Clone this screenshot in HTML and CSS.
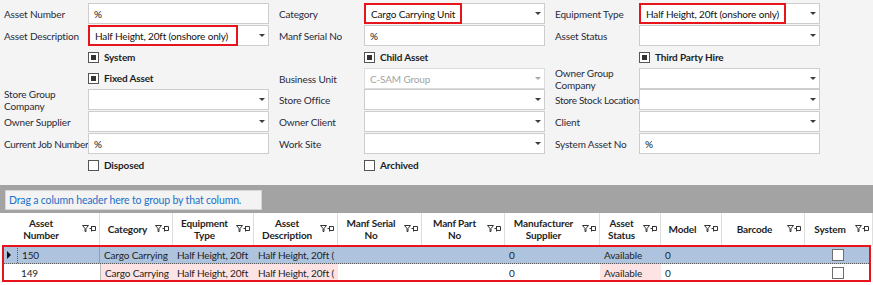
FILE: index.html
```html
<!DOCTYPE html>
<html lang="en">
<head>
    <meta charset="UTF-8">
    <title>Asset Search</title>
    <link rel="stylesheet" href="styles.css">
</head>
<body>

    <div class="filters">
        <div class="lbl">Asset Number</div>
        <div class="box"><span class="val">%</span></div>
        <div class="lbl">Category</div>
        <div class="box drop"><span class="val hl">Cargo Carrying Unit</span><i class="arrow"></i></div>
        <div class="lbl">Equipment Type</div>
        <div class="box drop"><span class="val hl">Half Height, 20ft (onshore only)</span><i class="arrow"></i></div>

        <div class="lbl">Asset Description</div>
        <div class="box drop"><span class="val hl hl-wide">Half Height, 20ft (onshore only)</span><i class="arrow"></i></div>
        <div class="lbl">Manf Serial No</div>
        <div class="box"><span class="val">%</span></div>
        <div class="lbl">Asset Status</div>
        <div class="box drop"><span class="val"></span><i class="arrow"></i></div>

        <div class="lbl"></div>
        <label class="check"><span class="cb on"></span>System</label>
        <div class="lbl"></div>
        <label class="check"><span class="cb on"></span>Child Asset</label>
        <div class="lbl"></div>
        <label class="check"><span class="cb on"></span>Third Party Hire</label>

        <div class="lbl"></div>
        <label class="check"><span class="cb on"></span>Fixed Asset</label>
        <div class="lbl">Business Unit</div>
        <div class="box drop disabled"><span class="val">C-SAM Group</span><i class="arrow"></i></div>
        <div class="lbl">Owner Group Company</div>
        <div class="box drop"><span class="val"></span><i class="arrow"></i></div>

        <div class="lbl">Store Group Company</div>
        <div class="box drop"><span class="val"></span><i class="arrow"></i></div>
        <div class="lbl">Store Office</div>
        <div class="box drop"><span class="val"></span><i class="arrow"></i></div>
        <div class="lbl nowrap tight">Store Stock Location</div>
        <div class="box drop"><span class="val"></span><i class="arrow"></i></div>

        <div class="lbl">Owner Supplier</div>
        <div class="box drop"><span class="val"></span><i class="arrow"></i></div>
        <div class="lbl">Owner Client</div>
        <div class="box drop"><span class="val"></span><i class="arrow"></i></div>
        <div class="lbl">Client</div>
        <div class="box drop"><span class="val"></span><i class="arrow"></i></div>

        <div class="lbl nowrap tight">Current Job Number</div>
        <div class="box"><span class="val">%</span></div>
        <div class="lbl">Work Site</div>
        <div class="box drop"><span class="val"></span><i class="arrow"></i></div>
        <div class="lbl">System Asset No</div>
        <div class="box"><span class="val">%</span></div>

        <div class="lbl"></div>
        <label class="check"><span class="cb"></span>Disposed</label>
        <div class="lbl"></div>
        <label class="check"><span class="cb"></span>Archived</label>
    </div>

    <div class="group-panel">
        <div class="group-hint">Drag a column header here to group by that column.</div>
    </div>

    <div class="grid-head">
        <div class="hcell"><span>Asset<br>Number</span><svg class="hicons" width="14" height="8" viewBox="0 0 14 8"><path d="M0.5 0.5H6.5L4 3.5V6.5H3V3.5Z" fill="none" stroke="#333"/><path d="M7.5 3.5H9.5M9.5 1V6.5M9.5 1.5H13.5V5.5H9.5" fill="none" stroke="#333"/></svg></div>
        <div class="hcell"><span>Category</span><svg class="hicons" width="14" height="8" viewBox="0 0 14 8"><path d="M0.5 0.5H6.5L4 3.5V6.5H3V3.5Z" fill="none" stroke="#333"/><path d="M7.5 3.5H9.5M9.5 1V6.5M9.5 1.5H13.5V5.5H9.5" fill="none" stroke="#333"/></svg></div>
        <div class="hcell"><span>Equipment<br>Type</span><svg class="hicons" width="14" height="8" viewBox="0 0 14 8"><path d="M0.5 0.5H6.5L4 3.5V6.5H3V3.5Z" fill="none" stroke="#333"/><path d="M7.5 3.5H9.5M9.5 1V6.5M9.5 1.5H13.5V5.5H9.5" fill="none" stroke="#333"/></svg></div>
        <div class="hcell"><span>Asset<br>Description</span><svg class="hicons" width="14" height="8" viewBox="0 0 14 8"><path d="M0.5 0.5H6.5L4 3.5V6.5H3V3.5Z" fill="none" stroke="#333"/><path d="M7.5 3.5H9.5M9.5 1V6.5M9.5 1.5H13.5V5.5H9.5" fill="none" stroke="#333"/></svg></div>
        <div class="hcell"><span>Manf Serial<br>No</span><svg class="hicons" width="14" height="8" viewBox="0 0 14 8"><path d="M0.5 0.5H6.5L4 3.5V6.5H3V3.5Z" fill="none" stroke="#333"/><path d="M7.5 3.5H9.5M9.5 1V6.5M9.5 1.5H13.5V5.5H9.5" fill="none" stroke="#333"/></svg></div>
        <div class="hcell"><span>Manf Part<br>No</span><svg class="hicons" width="14" height="8" viewBox="0 0 14 8"><path d="M0.5 0.5H6.5L4 3.5V6.5H3V3.5Z" fill="none" stroke="#333"/><path d="M7.5 3.5H9.5M9.5 1V6.5M9.5 1.5H13.5V5.5H9.5" fill="none" stroke="#333"/></svg></div>
        <div class="hcell"><span>Manufacturer<br>Supplier</span><svg class="hicons" width="14" height="8" viewBox="0 0 14 8"><path d="M0.5 0.5H6.5L4 3.5V6.5H3V3.5Z" fill="none" stroke="#333"/><path d="M7.5 3.5H9.5M9.5 1V6.5M9.5 1.5H13.5V5.5H9.5" fill="none" stroke="#333"/></svg></div>
        <div class="hcell"><span>Asset<br>Status</span><svg class="hicons" width="14" height="8" viewBox="0 0 14 8"><path d="M0.5 0.5H6.5L4 3.5V6.5H3V3.5Z" fill="none" stroke="#333"/><path d="M7.5 3.5H9.5M9.5 1V6.5M9.5 1.5H13.5V5.5H9.5" fill="none" stroke="#333"/></svg></div>
        <div class="hcell"><span>Model</span><svg class="hicons" width="14" height="8" viewBox="0 0 14 8"><path d="M0.5 0.5H6.5L4 3.5V6.5H3V3.5Z" fill="none" stroke="#333"/><path d="M7.5 3.5H9.5M9.5 1V6.5M9.5 1.5H13.5V5.5H9.5" fill="none" stroke="#333"/></svg></div>
        <div class="hcell"><span>Barcode</span><svg class="hicons" width="14" height="8" viewBox="0 0 14 8"><path d="M0.5 0.5H6.5L4 3.5V6.5H3V3.5Z" fill="none" stroke="#333"/><path d="M7.5 3.5H9.5M9.5 1V6.5M9.5 1.5H13.5V5.5H9.5" fill="none" stroke="#333"/></svg></div>
        <div class="hcell"><span>System</span><svg class="hicons" width="14" height="8" viewBox="0 0 14 8"><path d="M0.5 0.5H6.5L4 3.5V6.5H3V3.5Z" fill="none" stroke="#333"/><path d="M7.5 3.5H9.5M9.5 1V6.5M9.5 1.5H13.5V5.5H9.5" fill="none" stroke="#333"/></svg></div>
    </div>

    <div class="grid-rows">
        <div class="row selected">
            <div class="cell ind"><i class="row-arrow"></i></div>
            <div class="cell focus">150</div>
            <div class="cell">Cargo Carrying</div>
            <div class="cell">Half Height, 20ft</div>
            <div class="cell">Half Height, 20ft (</div>
            <div class="cell"></div>
            <div class="cell"></div>
            <div class="cell">0</div>
            <div class="cell">Available</div>
            <div class="cell">0</div>
            <div class="cell"></div>
            <div class="cell center"><span class="cb plain"></span></div>
        </div>
        <div class="row">
            <div class="cell ind"></div>
            <div class="cell">149</div>
            <div class="cell warn sep">Cargo Carrying</div>
            <div class="cell warn">Half Height, 20ft</div>
            <div class="cell warn">Half Height, 20ft (</div>
            <div class="cell"></div>
            <div class="cell"></div>
            <div class="cell">0</div>
            <div class="cell warn">Available</div>
            <div class="cell">0</div>
            <div class="cell"></div>
            <div class="cell center"><span class="cb plain"></span></div>
        </div>
    </div>

</body>
</html>
```

FILE: styles.css
```css
* {
    margin: 0;
    padding: 0;
    box-sizing: border-box;
}

body {
    font-family: Lato, 'Open Sans', sans-serif;
    font-size: 10px;
    letter-spacing: -0.15px;
    color: #1e1e1e;
    background: #ffffff;
}

/* filter form */

.filters {
    background: #f4f4f4;
    display: grid;
    grid-template-columns: 84px 181px 95px 181px 94px 181px;
    grid-template-rows: 22px 22px 21px 21px 22px 22px 22px 22px;
    padding: 3px 0 0 4px;
    height: 185px;
}

.lbl {
    display: flex;
    align-items: center;
    line-height: 12px;
    height: 21px;
    color: #2a2a3a;
}

.lbl:nth-child(6n+3),
.lbl:nth-child(6n+5) {
    padding-left: 10px;
}

.nowrap {
    white-space: nowrap;
}

.tight {
    letter-spacing: -0.3px;
}

.box {
    height: 21px;
    background: white;
    border: 1px solid #cdcdcd;
    display: flex;
    align-items: center;
}

.val {
    padding-left: 5px;
    color: #111;
    white-space: nowrap;
}

.val.hl {
    align-self: stretch;
    display: flex;
    align-items: center;
    margin: -1px 0 -1px -1px;
    border: 2px solid #e8141c;
    padding: 0 5px 0 5px;
}

.val.hl-wide {
    padding-right: 8px;
}

.disabled {
    border-color: #dcdcdc;
}

.disabled .val {
    color: #a4a4a4;
}

.arrow {
    margin-left: auto;
    margin-right: 3px;
    width: 0;
    height: 0;
    border-left: 3px solid transparent;
    border-right: 3px solid transparent;
    border-top: 3px solid #3c3c3c;
}

.disabled .arrow {
    border-top-color: #a8a8a8;
}

.check {
    display: flex;
    align-items: center;
    gap: 5px;
    font-weight: bold;
    height: 20px;
}

.cb {
    width: 11px;
    height: 11px;
    border: 1px solid #555;
    background: white;
    display: inline-block;
    position: relative;
}

.cb.on::after {
    content: '';
    position: absolute;
    left: 2px;
    top: 2px;
    width: 5px;
    height: 5px;
    background: #333;
}

.cb.plain {
    width: 12px;
    height: 12px;
    border-color: #6e6e6e;
}

/* grid */

.group-panel {
    background: #a3a3a3;
    height: 28px;
    padding: 5px 0 0 5px;
}

.group-hint {
    display: inline-flex;
    align-items: center;
    height: 20px;
    width: 257px;
    padding-left: 3px;
    background: #f3f3f3;
    border: 1px solid #d6d6d6;
    color: #2071c8;
    font-size: 10.5px;
}

.grid-head {
    display: grid;
    grid-template-columns: 100px 73px 81px 84px 84px 83px 95px 61px 61px 83px 68px;
    height: 32px;
    background: white;
}

.hcell {
    display: flex;
    align-items: center;
    border-right: 1px solid #dedede;
    font-weight: bold;
    line-height: 12px;
    padding-right: 3px;
}

.hcell span {
    flex: 1;
    text-align: center;
}

.hicons {
    flex: none;
}

.grid-rows {
    margin: 0 2px;
    outline: 2px solid #e8141c;
    outline-offset: -2px;
}

.row {
    display: grid;
    grid-template-columns: 15px 83px 73px 81px 84px 84px 83px 95px 61px 61px 83px 66px;
    height: 18px;
}

.row.selected {
    background: #aec3dd;
    height: 19px;
    border-bottom: 1px dotted #5a5a5a;
    padding-top: 1px;
}

.cell {
    display: flex;
    align-items: center;
    padding-left: 4px;
    white-space: nowrap;
    overflow: hidden;
}

.cell.ind {
    padding-left: 5px;
}

.row-arrow {
    width: 0;
    height: 0;
    border-top: 4px solid transparent;
    border-bottom: 4px solid transparent;
    border-left: 4px solid #111;
}

.cell.focus {
    border-left: 1px dotted #5a5a5a;
    border-right: 1px solid #8aa0bc;
}

.cell.warn {
    background: #fde3e3;
}

.cell.sep {
    border-left: 1px solid #bdbdbd;
}

.cell.center {
    justify-content: center;
    padding-left: 0;
}
```
